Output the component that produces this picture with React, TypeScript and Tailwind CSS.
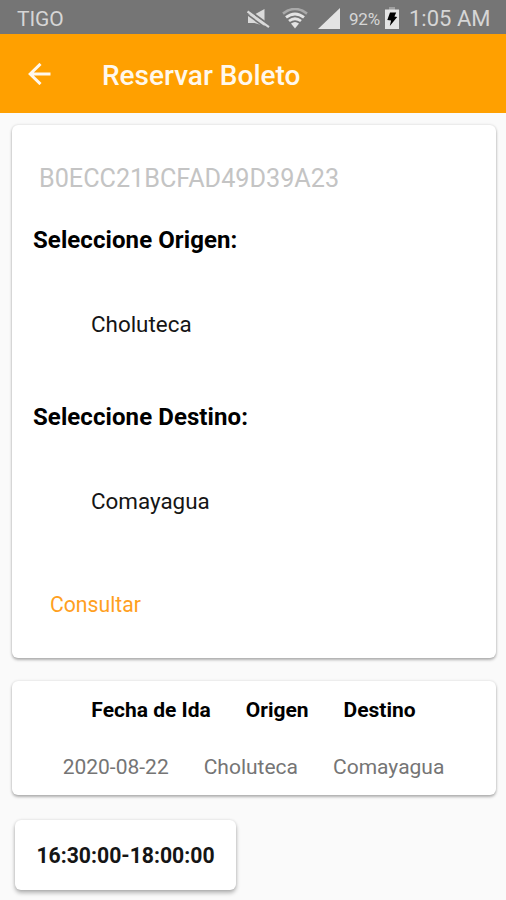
import React, { useState } from 'react';

const MuteIcon = () => (
  <svg width="24" height="20" viewBox="0 0 24 20" fill="none" aria-hidden="true">
    <path d="M1 5.5h6.5L17.5 0v17L7.5 14H1z" fill="#dadada" />
    <path d="M1.2 .8L23 16.6" stroke="#757575" strokeWidth="2" />
    <path d="M.5 2.5L22 18.2" stroke="#dadada" strokeWidth="2.2" />
    <path d="M-.8 4.7L20.7 20.4" stroke="#757575" strokeWidth="1.6" />
  </svg>
)

const WifiIcon = () => (
  <svg width="26" height="21" viewBox="0 0 26 21" fill="none" aria-hidden="true">
    <path d="M1 5.6Q13-3.6 25 5.6" stroke="#a9a9a9" strokeWidth="2.6" />
    <path d="M4 9.4Q13 2.4 22 9.4" stroke="#e4e4e4" strokeWidth="2.9" />
    <path d="M7 13Q13 8.4 19 13" stroke="#e4e4e4" strokeWidth="2.8" />
    <path d="M9 15.6Q13 12.6 17 15.6L13 20.4z" fill="#e4e4e4" />
  </svg>
)

const SignalIcon = () => (
  <svg width="22" height="21" viewBox="0 0 22 21" aria-hidden="true">
    <path d="M22 0v21H0z" fill="#e4e4e4" />
  </svg>
)

const BatteryIcon = () => (
  <svg width="14" height="22" viewBox="0 0 14 22" aria-hidden="true">
    <path d="M4 0h6v3H4z" fill="#a0a0a0" />
    <path d="M0 2.5h14V22H0z" fill="#e4e4e4" />
    <path d="M5 5.5h6.2L9.4 9.6l2.8.4L4.8 19l1.3-5.4-3.8-.5z" fill="#000" />
  </svg>
)

const BackIcon = () => (
  <svg width="23" height="22" viewBox="0 0 23 22" fill="none" stroke="#fff8ec" strokeWidth="3" aria-hidden="true">
    <path d="M12.5 .9L2.2 11l10.3 10.1M2 11h20.5" />
  </svg>
)

const StatusBar = () => (
  <div className="flex h-[34px] items-center bg-[#757575] pt-[3px] text-[#d6d6d6]">
    <span className="ml-[17px] w-[230px] text-[21px] leading-[30px] tracking-[-0.1px]">TIGO</span>
    <MuteIcon />
    <div className="ml-[11px]"><WifiIcon /></div>
    <div className="ml-[10px]"><SignalIcon /></div>
    <span className="ml-[9px] w-[36px] text-[17px] leading-[30px] tracking-[-0.2px]">92%</span>
    <div className="mb-[2px]"><BatteryIcon /></div>
    <span className="ml-[10px] whitespace-nowrap text-[22px] leading-[30px]">1:05 AM</span>
  </div>
)

const App = () => {
  const [stops] = useState([
    {label: 'Seleccione Origen:', city: 'Choluteca'},
    {label: 'Seleccione Destino:', city: 'Comayagua'},
  ])
  return (
    <div className="h-[900px] w-[506px] overflow-hidden bg-[#fafafa] font-['Roboto',sans-serif] text-[#151515]">
      <StatusBar />
      <div className="flex h-[79px] items-center bg-[#ffa000]">
        <div className="ml-[28px]"><BackIcon /></div>
        <h1 className="ml-[51px] mt-[5px] text-[28px] font-medium leading-[32px] text-[#fff8ec]">Reservar Boleto</h1>
      </div>

      <div className="ml-[12px] mr-[10px] mt-[12px] h-[533px] rounded-[6px] bg-white pt-[39px] shadow-[0_2px_3px_rgba(0,0,0,0.28),0_0_3px_rgba(0,0,0,0.14)]">
        <p className="ml-[27px] text-[25.2px] leading-[30px] text-[#c4c4c4]">B0ECC21BCFAD49D39A23</p>
        <div className="mt-[31px] flex flex-col gap-[63px]">
          {stops.map((stop, key) => (
            <div key={key}>
              <h2 className="ml-[21px] text-[24px] font-bold leading-[30px] tracking-[0.08px] text-black">{stop.label}</h2>
              <p className="ml-[79px] mt-[54px] text-[22.4px] leading-[30px]">{stop.city}</p>
            </div>
          ))}
        </div>
        <button className="ml-[38px] mt-[74px] block text-[21.2px] leading-[30px] text-[#ffa01e]">Consultar</button>
      </div>

      <div className="ml-[12px] mr-[10px] mt-[23px] h-[114px] rounded-[6px] bg-white pt-[14px] text-[21px] leading-[30px] shadow-[0_2px_3px_rgba(0,0,0,0.28),0_0_3px_rgba(0,0,0,0.12)]">
        <div className="flex justify-center gap-[35px] pr-[1px] font-bold text-black">
          <span>Fecha de Ida</span>
          <span>Origen</span>
          <span>Destino</span>
        </div>
        <div className="mt-[27px] flex justify-center gap-[35px] pr-[1px] text-[#757575]">
          <span>2020-08-22</span>
          <span>Choluteca</span>
          <span>Comayagua</span>
        </div>
      </div>

      <button className="ml-[15px] mt-[25px] flex h-[70px] w-[221px] items-center justify-center rounded-[6px] bg-white pt-[2px] text-[21.2px] font-bold shadow-[0_3px_4px_rgba(0,0,0,0.28),0_0_3px_rgba(0,0,0,0.12)]">
        16:30:00-18:00:00
      </button>
    </div>
  )
}

export default App
